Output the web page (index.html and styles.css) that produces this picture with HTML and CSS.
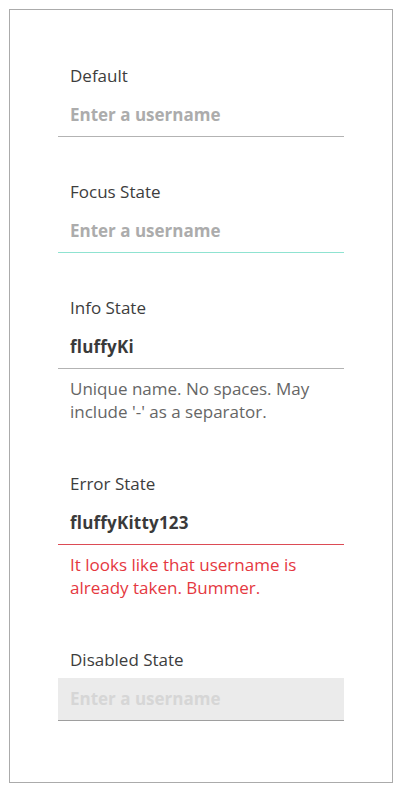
FILE: index.html
```html
<!DOCTYPE html>
<html lang="en">
<head>
<meta charset="utf-8">
<title>Text field states</title>
<link rel="stylesheet" href="styles.css">
</head>
<body>
<div class="frame">
  <div class="field">
    <label class="label">Default</label>
    <div class="input"><span class="placeholder">Enter a username</span></div>
  </div>
  <div class="field">
    <label class="label">Focus State</label>
    <div class="input input--focus"><span class="placeholder">Enter a username</span></div>
  </div>
  <div class="field">
    <label class="label">Info State</label>
    <div class="input"><span class="value">fluffyKi</span></div>
    <p class="helper">Unique name. No spaces. May include '-' as a separator.</p>
  </div>
  <div class="field">
    <label class="label">Error State</label>
    <div class="input input--error"><span class="value">fluffyKitty123</span></div>
    <p class="helper helper--error">It looks like that username is already taken. Bummer.</p>
  </div>
  <div class="field">
    <label class="label">Disabled State</label>
    <div class="input input--disabled"><span class="placeholder">Enter a username</span></div>
  </div>
</div>
</body>
</html>
```
FILE: styles.css
```css
html, body {
  margin: 0;
  padding: 0;
  background: #ffffff;
}
body {
  font-family: "Open Sans", "Noto Sans", sans-serif;
  font-size: 17px;
  color: #3a3a3a;
}
.frame {
  box-sizing: border-box;
  margin: 9px 0 0 9px;
  width: 384px;
  height: 774px;
  border: 1px solid #ababab;
  padding: 54px 48px 0 48px;
}
.field {
  margin-bottom: 43px;
}
.label {
  display: block;
  line-height: 24px;
  padding-left: 12px;
  color: #3d3d3d;
}
.input {
  box-sizing: border-box;
  margin-top: 6px;
  height: 43px;
  border-bottom: 1px solid #b3b3b3;
  padding: 0 0 1px 12px;
  display: flex;
  align-items: center;
}
.input--focus { border-bottom: 1px solid #8fe3d1; }
.input--error { border-bottom: 1px solid #dc4b55; }
.input--disabled {
  background: #ebebeb;
  border-bottom: 1px solid #9e9e9e;
}
.placeholder {
  font-size: 17px;
  font-weight: 700;
  color: #acacac;
}
.input--disabled .placeholder { color: #d6d6d6; }
.value {
  font-size: 17px;
  font-weight: 700;
  letter-spacing: 0.2px;
  color: #3a3a3a;
}
.helper {
  margin: 8px 0 0 0;
  padding: 0 0 6px 12px;
  line-height: 23px;
  color: #666666;
}
.helper--error { color: #e5383f; }
```
